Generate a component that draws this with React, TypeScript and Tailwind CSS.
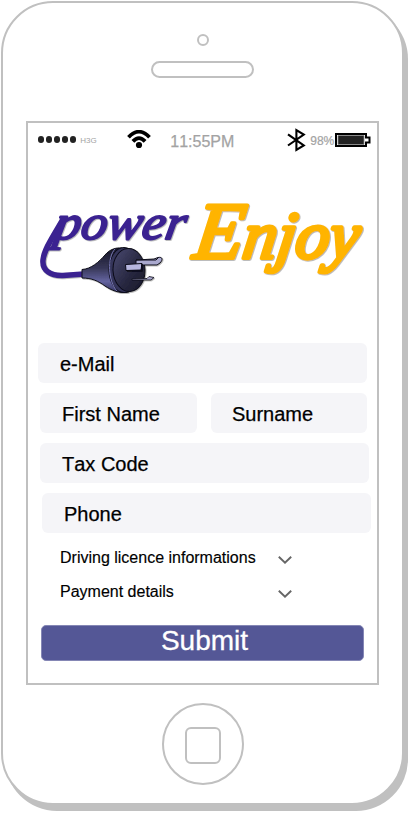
import React from 'react';

const outline = 'border-2 border-[#c0c0c0]';

function Field({ label, className }: { label: string; className: string }) {
  return (
    <div className={`flex h-10 items-center rounded-[6px] bg-[#f5f5f8] text-[20px] leading-none text-black ${className}`}>
      <span className="mt-[2px] whitespace-nowrap [font-kerning:none] [-webkit-text-stroke:0.25px_#000]">{label}</span>
    </div>
  );
}

function Expander({ label }: { label: string }) {
  return (
    <div className="flex h-[34px] w-[232px] items-center justify-between text-[16px] leading-none">
      <span className="mt-[2px] whitespace-nowrap [-webkit-text-stroke:0.15px_#000]">{label}</span>
      <svg className="mt-[5px]" width="14" height="8" viewBox="0 0 14 8" fill="none" stroke="#666" strokeWidth="1.9">
        <path d="M.8.7 7 6.7 13.2.7" />
      </svg>
    </div>
  );
}

function StatusBar() {
  return (
    <div className="flex h-[33px] items-center pl-[10px] text-[#a3a3a3]">
      <div className="flex gap-[1.7px]">
        {[0, 1, 2, 3, 4].map((i) => (
          <span key={i} className="size-[6.3px] rounded-full bg-[#222]" />
        ))}
      </div>
      <span className="ml-[4px] mt-[2px] w-[17px] text-[8px] leading-none">H3G</span>
      <svg className="ml-[30px] shrink-0" width="24" height="20" viewBox="0 0 24 20" fill="none" stroke="#000" strokeWidth="3.8">
        <path d="M1.5 7.2Q12-3.8 22.5 7.2" />
        <path d="M5.9 11.4Q12 4.8 18.1 11.4" />
        <circle cx="12" cy="15" r="3.1" fill="#000" stroke="none" />
      </svg>
      <span className="mt-[4px] ml-[19px] w-[66px] text-[16px] leading-none [font-kerning:none] [-webkit-text-stroke:0.25px_#a3a3a3]">11:55PM</span>
      <svg className="ml-[51px] mr-[1px] shrink-0" width="19" height="24" viewBox="0 0 19 24" fill="none" stroke="#000" strokeWidth="2.1">
        <path d="m1 6.3 15.8 11.2L9.4 22V2l7.4 4.5L1 17.5" />
      </svg>
      <span className="mt-[3px] ml-[3px] w-[25px] text-[12px] leading-none [-webkit-text-stroke:0.2px_#a3a3a3]">98%</span>
      <svg className="shrink-0" width="36" height="16" viewBox="0 0 36 16">
        <path d="M1 2h30v3.5h3.5v5H31V14H1Z" fill="#fff" stroke="#000" strokeWidth="2" />
        <path d="M3 3.500h26v9h-26Z" fill="#222" stroke="#888" strokeWidth=".8" />
      </svg>
    </div>
  );
}

function Logo() {
  return (
    <svg width="349" height="145" viewBox="28 160 349 145" className="block">
      <defs>
        <linearGradient id="cone" x1="0" y1="0" x2="0" y2="1">
          <stop offset="0" stopColor="#151525" />
          <stop offset=".45" stopColor="#373757" />
          <stop offset=".75" stopColor="#6464a0" />
          <stop offset="1" stopColor="#31315a" />
        </linearGradient>
        <linearGradient id="face" x1="0" y1="0" x2="1" y2="1">
          <stop offset="0" stopColor="#4a4a72" />
          <stop offset=".6" stopColor="#26263e" />
          <stop offset="1" stopColor="#181828" />
        </linearGradient>
        <filter id="shade" x="-10%" y="-10%" width="125%" height="130%">
          <feDropShadow dx=".8" dy=".8" stdDeviation=".7" floodColor="#555" floodOpacity=".5" />
        </filter>
      </defs>
      <g filter="url(#shade)">
        <path d="M63 219C54 235 44 249 43 260C42 271 51 276 63 275.500L84 274" fill="none" stroke="#3b2191" strokeWidth="5.500" />
        <text transform="translate(53 239) skewX(-10)" textLength="131" lengthAdjust="spacingAndGlyphs" className="fill-[#3b2191] stroke-[#3b2191] stroke-[2] font-['Liberation_Serif'] text-[49px] italic [stroke-linejoin:round]">power</text>
      </g>
      <g filter="url(#shade)" stroke="#0b0b18" strokeWidth="1">
        <path d="M82 269.500C91 269 99 262 105 255C110 249 116 247.500 122 248L129 292C119 294 111 290 105 286C98 281 92 278 82 278Z" fill="url(#cone)" />
        <ellipse cx="124" cy="270" rx="15" ry="22.500" fill="#34345a" />
        <ellipse cx="129" cy="270" rx="16" ry="21.500" fill="url(#face)" transform="rotate(-3 129 270)" />
        <path d="M115 249C107 257 108 282 117 291" fill="none" stroke="#7777b4" />
        <path d="M136 260 154 259 158 257.500C163 256.500 163 260 160 263L157 265 136 265Z" fill="#aaa9ce" />
        <path d="M136 260 156 260 158 258" fill="none" />
        <path d="M125.500 264.500 142 263.500 141 270 126 270.500Z" fill="#b7b6df" />
        <path d="M142 264V271H127" fill="none" strokeWidth="1.500" />
        <path d="M132 279 147 278.500 149 276.500 154 277.500 151 280 132 280Z" fill="#aaa9ce" strokeWidth=".8" />
      </g>
      <g filter="url(#shade)">
        <text transform="translate(192 258) skewX(-8)" textLength="165" lengthAdjust="spacingAndGlyphs" className="fill-[#ffb400] stroke-[#ffb400] stroke-[4] font-['Liberation_Serif'] text-[67px] italic [stroke-linejoin:round]"><tspan className="text-[80px]">E</tspan>njoy</text>
      </g>
    </svg>
  );
}

export default function App() {
  return (
    <main className="h-[814px] w-[411px] overflow-hidden bg-white pl-px pt-px font-['Liberation_Sans',Arial,sans-serif] text-black">
      <div className={`flex h-[804px] w-[403px] flex-col rounded-[52px] bg-white shadow-[4px_6px_0_#c0c0c0] ${outline}`}>
        <div className={`ml-[194px] mt-[31px] size-[12px] shrink-0 rounded-full ${outline}`} />
        <div className={`ml-[148px] mt-[15px] h-[17px] w-[103px] shrink-0 rounded-full ${outline}`} />
        <section className={`ml-[23px] mt-[43px] flex h-[564px] w-[353px] shrink-0 flex-col ${outline}`}>
          <StatusBar />
          <div className="mt-[4px] h-[145px]">
            <Logo />
          </div>
          <form className="mt-[38px]" onSubmit={(e) => e.preventDefault()}>
            <div className="flex flex-col gap-[10px]">
              <Field label="e-Mail" className="ml-[10px] w-[329px] pl-[22px]" />
              <div className="ml-[12px] flex gap-[14px]">
                <Field label="First Name" className="w-[156.5px] pl-[22px]" />
                <Field label="Surname" className="w-[156.5px] pl-[21.5px]" />
              </div>
              <Field label="Tax Code" className="ml-[12px] w-[329px] pl-[22px]" />
              <Field label="Phone" className="ml-[14px] w-[329px] pl-[22px]" />
            </div>
            <div className="ml-[32px] mt-[7px]">
              <Expander label="Driving licence informations" />
              <Expander label="Payment details" />
            </div>
            <button className="ml-[13px] mt-[16.5px] flex h-[36px] w-[323px] items-start justify-center rounded-[5px] border border-[#8587b5] bg-[#545796] pl-1 text-[28px] leading-[30px] text-white [-webkit-text-stroke:0.3px_#fff]" type="submit">
              Submit
            </button>
          </form>
        </section>
        <div className={`ml-[159px] mt-[18px] flex size-[82px] shrink-0 items-center justify-center rounded-full ${outline}`}>
          <div className={`mt-[3px] h-[37px] w-[36px] rounded-[6px] ${outline}`} />
        </div>
      </div>
    </main>
  );
}
